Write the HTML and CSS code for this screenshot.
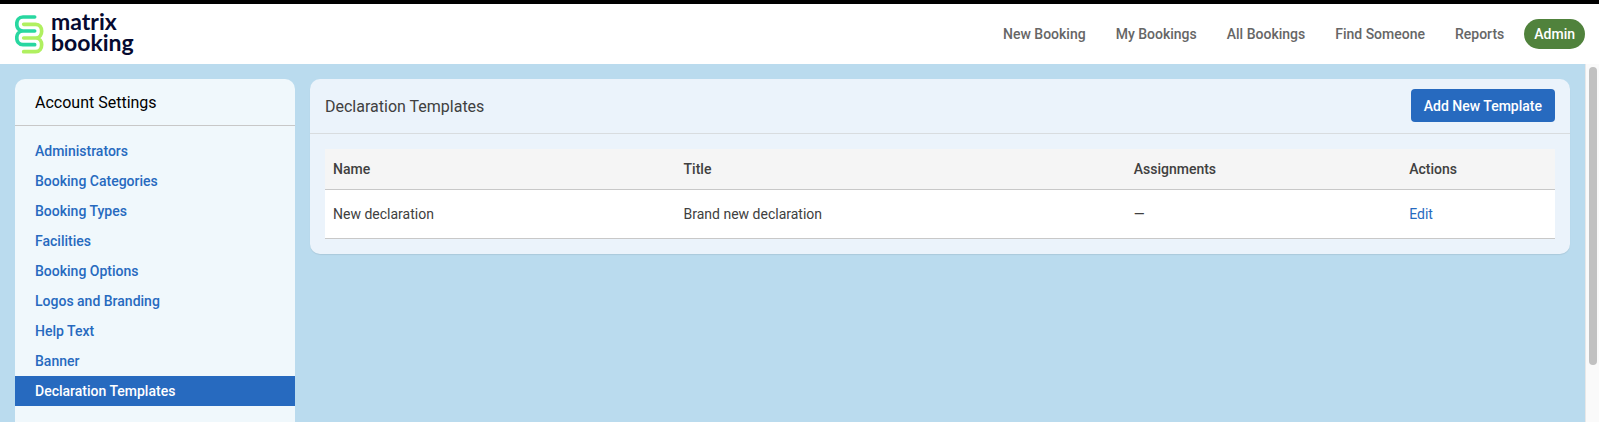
FILE: index.html
```html
<!DOCTYPE html>
<html lang="en">
<head>
<meta charset="utf-8">
<title>Declaration Templates - Matrix Booking</title>
<link rel="stylesheet" href="styles.css">
</head>
<body>
<header class="topbar">
  <a class="brand" href="#">
    <svg class="brand-mark" viewBox="0 0 90 120" fill="none" stroke-width="11" stroke-linecap="round" aria-hidden="true">
      <path stroke="#b0f060" d="M26 31H62C86 31 86 72 62 72H26M62 72C86 72 86 113 62 113H26"/>
      <path stroke="#28d7a0" d="M59 9H24C-1 9 -1 51 24 51H59M24 51C-1 51 -1 92 24 92H59"/>
    </svg>
    <span class="brand-name"><span>matrix</span><span>booking</span></span>
  </a>
  <nav class="main-nav">
    <a href="#">New Booking</a>
    <a href="#">My Bookings</a>
    <a href="#">All Bookings</a>
    <a href="#">Find Someone</a>
    <a href="#">Reports</a>
    <a class="current" href="#">Admin</a>
  </nav>
</header>
<div class="viewport">
  <div class="page">
    <aside class="sidebar">
      <h2 class="sidebar-title">Account Settings</h2>
      <nav class="side-nav">
        <a href="#">Administrators</a>
        <a href="#">Booking Categories</a>
        <a href="#">Booking Types</a>
        <a href="#">Facilities</a>
        <a href="#">Booking Options</a>
        <a href="#">Logos and Branding</a>
        <a href="#">Help Text</a>
        <a href="#">Banner</a>
        <a class="current" href="#">Declaration Templates</a>
      </nav>
    </aside>
    <main class="panel">
      <div class="panel-head">
        <h1>Declaration Templates</h1>
        <button type="button">Add New Template</button>
      </div>
      <div class="panel-body">
        <table class="templates">
          <colgroup><col class="col-name"><col class="col-title"><col class="col-assign"><col></colgroup>
          <thead><tr><th>Name</th><th>Title</th><th>Assignments</th><th>Actions</th></tr></thead>
          <tbody><tr><td>New declaration</td><td>Brand new declaration</td><td>—</td><td><a href="#">Edit</a></td></tr></tbody>
        </table>
      </div>
    </main>
  </div>
  <div class="scroll-track" aria-hidden="true"><div class="scroll-thumb"></div></div>
</div>
</body>
</html>
```

FILE: styles.css
```css
* { box-sizing: border-box; }

body {
  margin: 0;
  height: 100vh;
  display: flex;
  flex-direction: column;
  overflow: hidden;
  background: #badbee;
  color: #404040;
  font: 14px/20px Roboto, "Liberation Sans", sans-serif;
}

a { color: #276abf; text-decoration: none; }

.topbar {
  display: flex;
  flex: none;
  justify-content: space-between;
  align-items: center;
  height: 64px;
  padding: 0 14px 0 15px;
  border-top: 4px solid #000;
  background: #fff;
}

.brand { display: flex; align-items: center; gap: 6px; color: #050a30; }
.brand-mark { width: 30px; height: 40px; }
.brand-name {
  display: flex;
  flex-direction: column;
  padding-bottom: 4px;
  font: 700 23px/21px Lato, "Open Sans", sans-serif;
}

.main-nav { display: flex; gap: 10px; font-weight: 500; }
.main-nav a { padding: 5px 10px; color: #666; border-radius: 15px; }
.main-nav .current { background: #50823c; color: #fff; }

.viewport { display: flex; flex: 1; min-height: 0; }

.page {
  display: flex;
  flex: 1;
  gap: 15px;
  padding: 15px 15px 0;
  align-items: flex-start;
}

.sidebar {
  flex: none;
  width: 280px;
  align-self: stretch;
  border-radius: 10px 10px 0 0;
  background: #f0f8fc;
}
.sidebar-title {
  margin: 0;
  padding: 14px 20px 12px;
  border-bottom: 1px solid #c8c8c8;
  color: #000;
  font-size: 16px;
  font-weight: 400;
}
.side-nav { padding-top: 10px; font-weight: 500; }
.side-nav a { display: block; padding: 5px 20px; }
.side-nav .current { background: #276abf; color: #fff; }

.panel {
  flex: 1;
  border-radius: 10px;
  background: #ebf3fb;
  box-shadow: 0 1px 1px rgba(0, 0, 0, .08);
}
.panel-head {
  display: flex;
  justify-content: space-between;
  align-items: flex-start;
  padding: 10px 15px 11px;
  border-bottom: 1px solid #d8dcdf;
}
.panel-head h1 { margin: 0; padding-top: 8px; font-size: 16px; font-weight: 400; }
.panel-head button {
  padding: 7px 13px 6px;
  border: 0;
  border-radius: 4px;
  background: #276abf;
  color: #fff;
  font: inherit;
  font-weight: 500;
}
.panel-body { padding: 15px; }

.templates { width: 100%; table-layout: fixed; border-collapse: separate; border-spacing: 0; }
.col-name { width: 28.5%; }
.col-title { width: 36.6%; }
.col-assign { width: 22.4%; }
.templates th, .templates td { border-bottom: 1px solid #c8c8c8; text-align: left; }
.templates th { padding: 10px 8px; background: #f5f5f5; font-weight: 500; }
.templates td { padding: 14px 8px; background: #fff; }

.scroll-track {
  flex: none;
  width: 14px;
  padding: 3px 2px 0 3px;
  border-left: 1px solid #e8e8e8;
  background: #fafafa;
}
.scroll-thumb { height: 84%; border-radius: 4px; background: #c1c1c1; }
```
